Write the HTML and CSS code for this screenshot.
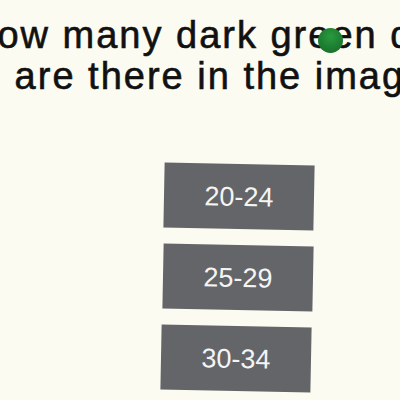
FILE: index.html
```html
<!DOCTYPE html>
<html>
<head>
<meta charset="utf-8">
<link rel="stylesheet" href="styles.css">
</head>
<body>
<div class="screen">
  <div class="question">
    <div class="line line1">How many dark green dots</div>
    <div class="line line2">are there in the image?</div>
    <span class="dot"></span>
  </div>
  <div class="answers">
    <div class="answer a1">20-24</div>
    <div class="answer a2">25-29</div>
    <div class="answer a3">30-34</div>
  </div>
</div>
</body>
</html>
```
FILE: styles.css
```css
html, body {
  margin: 0;
  padding: 0;
  background: #fbfbf1;
}
.screen {
  width: 400px;
  height: 400px;
  overflow: hidden;
  position: relative;
  font-family: "Liberation Sans", Arial, sans-serif;
}
.question {
  position: relative;
  width: 700px;
  margin-left: -117px;
  padding-top: 15px;
  text-align: center;
  color: #111;
  font-size: 38px;
  line-height: 41px;
  letter-spacing: 2px;
  white-space: nowrap;
  -webkit-text-stroke: 0.6px #111;
}
.line1 {
  transform: translateX(-14px);
}
.dot {
  position: absolute;
  left: 435px;
  top: 28px;
  width: 25px;
  height: 25px;
  border-radius: 50%;
  background: radial-gradient(circle at 50% 35%, #2a9a3e 0%, #1d7d31 55%, #176a28 100%);
}
.answers {
  display: flex;
  flex-direction: column;
  gap: 16px;
  margin-top: 67px;
  margin-left: 163px;
}
.answer {
  width: 150px;
  height: 65px;
  background: #646569;
  color: #f4f4f4;
  font-size: 27px;
  display: flex;
  align-items: center;
  justify-content: center;
  padding-top: 2px;
  box-sizing: border-box;
  transform: rotate(1.1deg);
}
.a1 { margin-left: 1px; }
.a2 { margin-left: 0; }
.a3 { margin-left: -2px; }
```
